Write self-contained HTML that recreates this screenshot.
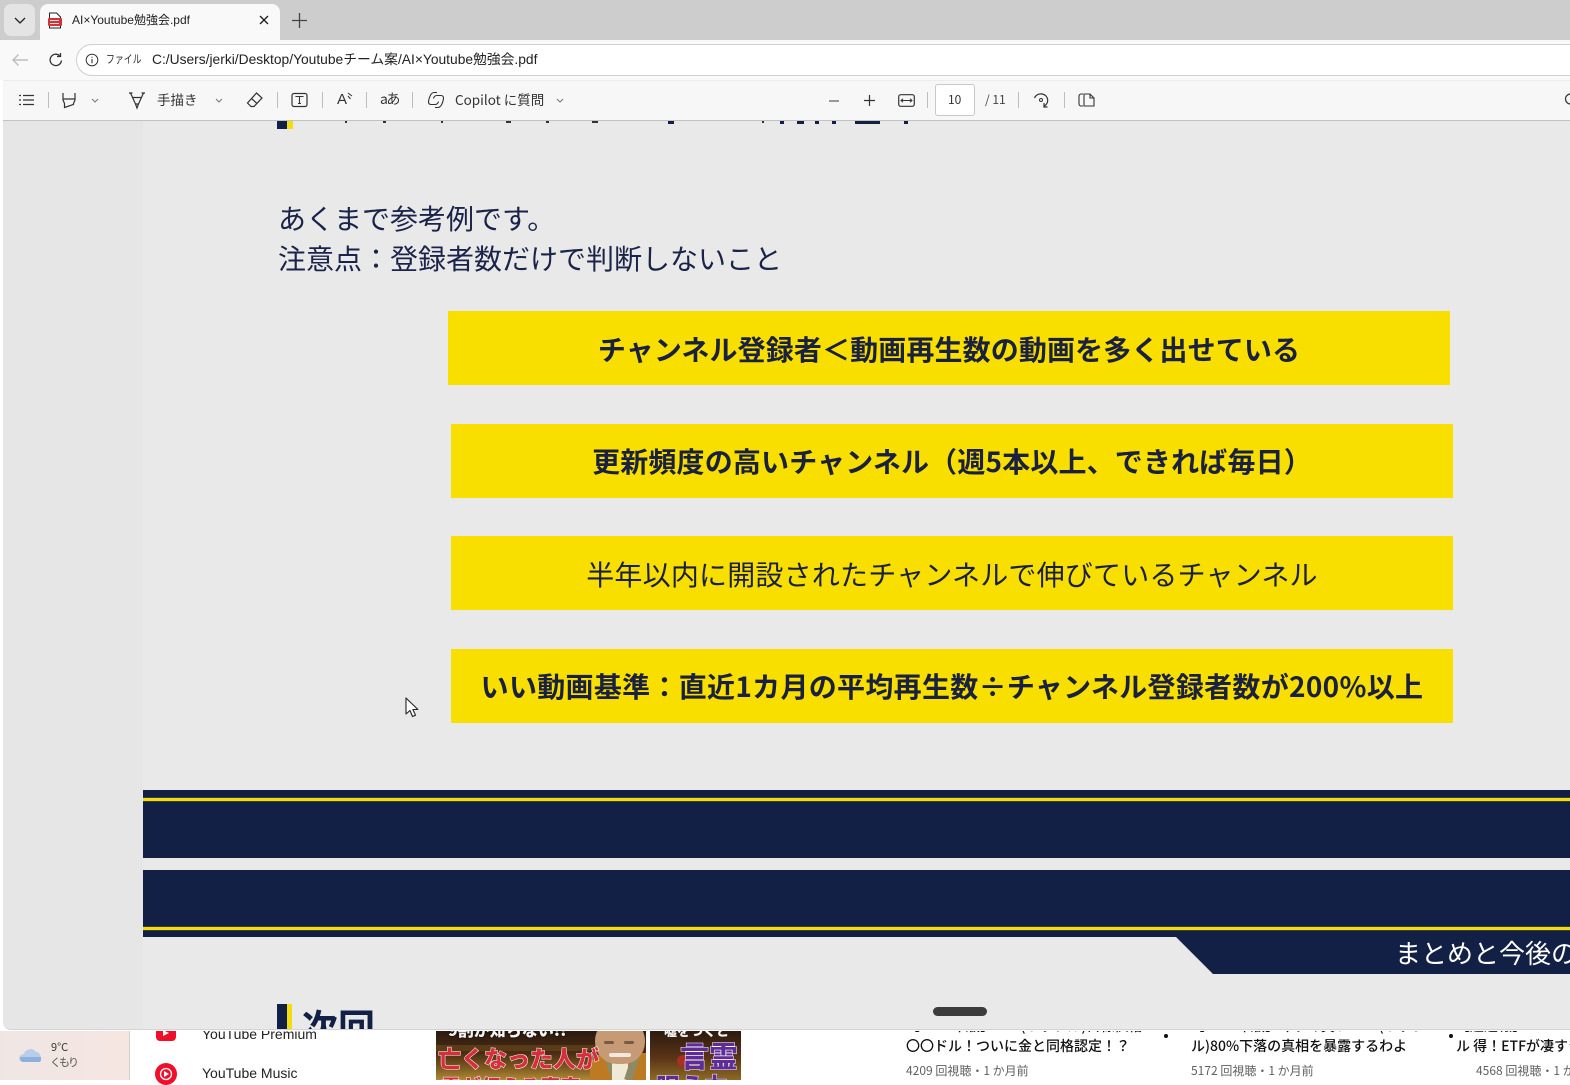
<!DOCTYPE html>
<html lang="ja"><head><meta charset="utf-8"><title>AI×Youtube勉強会.pdf</title>
<style>
*{box-sizing:border-box}
html,body{margin:0;padding:0;width:1570px;height:1080px;overflow:hidden;background:#fff;font-family:"Liberation Sans","Noto Sans CJK JP",sans-serif}
.a{position:absolute}
.t{position:absolute;white-space:nowrap;line-height:1}
.j{font-family:"Noto Sans CJK JP",sans-serif}
.l{font-family:"Liberation Sans","Noto Sans CJK JP",sans-serif}
.y{position:absolute;width:1002px;height:74px;background:#f9df00;color:#1a2140;font:700 28px/76px "Noto Sans CJK JP",sans-serif;text-align:center;white-space:nowrap}
svg{position:absolute;overflow:visible}
.sep{position:absolute;top:92px;width:1px;height:16px;background:#bdbdbd}
</style></head><body>

<!-- underlying page -->
<div class="a" style="left:0;top:1031px;width:130px;height:49px;background:linear-gradient(90deg,#efe6e3,#f6e6e2)"></div>
<div class="a" style="left:129px;top:1031px;width:1px;height:49px;background:#d8d0ce"></div>
<svg style="left:18px;top:1043px" width="26" height="20" viewBox="0 0 26 20"><path d="M2 18c-2-4 1-7 4-7 1-5 9-7 12-2 4 0 6 5 4 9z" fill="#b7cde9"/><path d="M2 14h21v3c0 1-1 2-2 2H5c-2 0-3-2-3-5z" fill="#8db0dd"/></svg>
<div class="t j" style="left:51px;top:1042px;font-size:11px;color:#333">9°C</div>
<div class="t j" style="left:50px;top:1057px;font-size:11px;color:#555;letter-spacing:-2px">くもり</div>

<div class="a" style="left:156px;top:1020px;width:20px;height:21px;background:#f00f2b;border-radius:4px"></div>
<div class="a" style="left:163px;top:1030px;width:0;height:0;border-left:6px solid #fff;border-top:3.500px solid transparent;border-bottom:3.500px solid transparent"></div>
<div class="t" style="left:202px;top:1027px;font-size:14px;color:#222">YouTube Premium</div>
<svg style="left:155px;top:1063px" width="22" height="22" viewBox="0 0 22 22"><circle cx="11" cy="11" r="11" fill="#f00f2b"/><circle cx="11" cy="11" r="5.500" fill="none" stroke="#fff" stroke-width="1.300"/><path d="M9 8l5 3-5 3z" fill="#fff"/></svg>
<div class="t" style="left:202px;top:1066px;font-size:14px;color:#222">YouTube Music</div>

<div class="a" style="left:436px;top:1031px;width:210px;height:49px;background:linear-gradient(180deg,#2c1a10,#4a2c14 45%,#7c5a1f 75%,#b08a35);overflow:hidden">
  <div class="a" style="left:0;top:14px;width:160px;height:6px;background:#6a4a1c;opacity:.6"></div>
  <div class="a" style="left:154px;top:22px;width:56px;height:30px;background:#bd7a20;border-radius:16px 0 0 0"></div>
  <div class="a" style="left:172px;top:24px;width:8px;height:26px;background:#8d8a66;transform:rotate(-18deg)"></div>
  <div class="a" style="left:176px;top:28px;width:16px;height:22px;background:#efe9d6"></div>
  <div class="a" style="left:192px;top:24px;width:8px;height:26px;background:#8d8a66;transform:rotate(18deg)"></div>
  <div class="a" style="left:159px;top:-14px;width:50px;height:47px;background:#c79a76;border-radius:24px 24px 22px 22px"></div>
  <div class="a" style="left:168px;top:10px;width:10px;height:3px;background:#7a5a44;border-radius:2px"></div>
  <div class="a" style="left:188px;top:10px;width:10px;height:3px;background:#7a5a44;border-radius:2px"></div>
  <div class="a" style="left:173px;top:22px;width:22px;height:4px;background:#f3e8de;border-radius:2px"></div>
  <div class="t j" style="left:12px;top:-10px;font-size:16px;font-weight:900;color:#f3f3f3;text-shadow:0 0 2px #000">9割が知らない!!</div>
  <div class="t j" style="left:2px;top:15px;font-size:23px;font-weight:900;color:#d62f3b;-webkit-text-stroke:1px #fff;paint-order:stroke fill">亡くなった人が</div>
  <div class="t j" style="left:5px;top:45px;font-size:20px;font-weight:900;color:#d62f3b;-webkit-text-stroke:1px #fff;paint-order:stroke fill">霊が伝える真実</div>
</div>
<div class="a" style="left:650px;top:1031px;width:91px;height:49px;background:linear-gradient(180deg,#2c1a10,#5a3416 55%,#8d6a25);overflow:hidden">
  <div class="a" style="left:27px;top:24px;width:16px;height:12px;background:#a82f22;border-radius:6px"></div>
  <div class="t j" style="left:14px;top:-7px;font-size:13px;font-weight:900;color:#f3f3f3">嘘をつくと</div>
  <div class="t j" style="left:30px;top:10px;font-size:29px;font-weight:900;color:#5e2c96;-webkit-text-stroke:1px #fff;paint-order:stroke fill">言霊</div>
  <div class="t j" style="left:6px;top:42px;font-size:24px;font-weight:900;color:#5e2c96;-webkit-text-stroke:1px #fff;paint-order:stroke fill">呪う力</div>
</div>

<div class="t j" style="left:906px;top:1019px;font-size:14px;font-weight:500;color:#111">【2024年版】XRP(リップル)目標価格</div>
<div class="t j" style="left:906px;top:1039px;font-size:14px;font-weight:500;color:#111">〇〇ドル！ついに金と同格認定！？</div>
<div class="t j" style="left:906px;top:1065px;font-size:12px;color:#606060">4209 回視聴・1 か月前</div>
<div class="a" style="left:1164px;top:1034px;width:4px;height:4px;background:#111;border-radius:50%"></div>
<div class="t j" style="left:1191px;top:1019px;font-size:14px;font-weight:500;color:#111">【2024年版】今すぐ買い XRP(リップ</div>
<div class="t j" style="left:1191px;top:1039px;font-size:14px;font-weight:500;color:#111">ル)80%下落の真相を暴露するわよ</div>
<div class="t j" style="left:1191px;top:1065px;font-size:12px;color:#606060">5172 回視聴・1 か月前</div>
<div class="a" style="left:1449px;top:1034px;width:4px;height:4px;background:#111;border-radius:50%"></div>
<div class="t j" style="left:1456px;top:1019px;font-size:14px;font-weight:500;color:#111">【超速報】XRP</div>
<div class="t j" style="left:1456px;top:1039px;font-size:14px;font-weight:500;color:#111">ル 得！ETFが凄すぎ</div>
<div class="t j" style="left:1476px;top:1065px;font-size:12px;color:#606060">4568 回視聴・1 か月前</div>

<!-- PDF viewer -->
<div class="a" style="left:0;top:121px;width:1570px;height:910px;background:#fff">
<div class="a" style="left:3px;top:0;width:1567px;height:909px;background:#e6e6e6;overflow:hidden;border-radius:0 0 0 8px;border-bottom:1px solid #d4d4d4">
 <div class="a" style="left:-3px;top:0;width:1570px;height:909px">
  <div class="a" style="left:143px;top:0;width:1427px;height:909px;background:#e9e9e9"></div>
  <div class="a" style="left:277px;top:0;width:10px;height:8px;background:#132046"></div>
  <div class="a" style="left:287px;top:0;width:6px;height:8px;background:#f5dc10"></div>
  <div class="a" style="left:345px;top:0;width:2px;height:2px;background:#333"></div>
  <div class="a" style="left:383px;top:0;width:3px;height:2px;background:#333"></div>
  <div class="a" style="left:441px;top:0;width:2px;height:2px;background:#333"></div>
  <div class="a" style="left:506px;top:0;width:5px;height:2px;background:#333"></div>
  <div class="a" style="left:546px;top:0;width:3px;height:2px;background:#333"></div>
  <div class="a" style="left:592px;top:0;width:6px;height:2px;background:#333"></div>
  <div class="a" style="left:668px;top:0;width:6px;height:3px;background:#132046"></div>
  <div class="a" style="left:762px;top:0;width:2px;height:2px;background:#333"></div>
  <div class="a" style="left:780px;top:0;width:4px;height:3px;background:#132046"></div>
  <div class="a" style="left:797px;top:0;width:7px;height:3px;background:#132046"></div>
  <div class="a" style="left:815px;top:0;width:4px;height:3px;background:#132046"></div>
  <div class="a" style="left:832px;top:0;width:4px;height:3px;background:#132046"></div>
  <div class="a" style="left:855px;top:0;width:25px;height:3px;background:#132046"></div>
  <div class="a" style="left:904px;top:0;width:4px;height:3px;background:#132046"></div>

  <div class="t j" style="left:278px;top:77px;font-size:28px;line-height:40px;color:#1a2348">あくまで参考例です。<br>注意点：登録者数だけで判断しないこと</div>

  <div class="y" style="left:448px;top:190px;letter-spacing:.12px">チャンネル登録者＜動画再生数の動画を多く出せている</div>
  <div class="y" style="left:451px;top:303px;letter-spacing:.16px;line-height:74px">更新頻度の高いチャンネル（週5本以上、できれば毎日）</div>
  <div class="y" style="left:451px;top:415px;font-weight:400;letter-spacing:.2px">半年以内に開設されたチャンネルで伸びているチャンネル</div>
  <div class="y" style="left:451px;top:528px;letter-spacing:.3px;line-height:74px">いい動画基準：直近1カ月の平均再生数÷チャンネル登録者数が200%以上</div>

  <svg style="left:405px;top:576px" width="14" height="22" viewBox="0 0 14 22"><path d="M1 1v16l4-3.500 2.500 6 3-1.300-2.600-5.700h5z" fill="#fff" stroke="#222" stroke-width="1.100" stroke-linejoin="round"/></svg>

  <div class="a" style="left:143px;top:669px;width:1427px;height:68px;background:#132046"></div>
  <div class="a" style="left:143px;top:676px;width:1427px;height:5px;background:#3a3f3a"></div>
  <div class="a" style="left:143px;top:677px;width:1427px;height:3px;background:#f5dc10"></div>
  <div class="a" style="left:143px;top:749px;width:1427px;height:67px;background:#132046"></div>
  <div class="a" style="left:143px;top:805px;width:1427px;height:5px;background:#3a3f3a"></div>
  <div class="a" style="left:143px;top:806px;width:1427px;height:3px;background:#f5dc10"></div>
  <svg style="left:1176px;top:816px" width="394" height="37" viewBox="0 0 394 37"><path d="M0 0H394V37H37z" fill="#132046"/></svg>
  <div class="t j" style="left:1395px;top:817px;font-size:26px;line-height:30px;color:#fff">まとめと今後の</div>

  <div class="a" style="left:277px;top:883px;width:10px;height:26px;background:#132046"></div>
  <div class="a" style="left:287px;top:883px;width:5px;height:26px;background:#f5dc10"></div>
  <div class="t j" style="left:301px;top:882px;font-size:37px;line-height:44px;font-weight:700;color:#132046">次回</div>

  <div class="a" style="left:933px;top:886px;width:54px;height:9px;border-radius:5px;background:#3c3c3c"></div>
 </div>
</div>
</div>

<!-- tab strip -->
<div class="a" style="left:0;top:0;width:1570px;height:40px;background:#cdcdcd"></div>
<div class="a" style="left:4px;top:4px;width:31px;height:32px;border-radius:7px;background:#e4e4e4"></div>
<svg style="left:14px;top:17px" width="12" height="7" viewBox="0 0 12 7"><path d="M1 1l5 5 5-5" fill="none" stroke="#222" stroke-width="1.300"/></svg>
<div class="a" style="left:40px;top:4px;width:240px;height:36px;border-radius:8px 8px 0 0;background:#f9f9f9"></div>
<svg style="left:47px;top:12px" width="16" height="17" viewBox="0 0 16 17"><path d="M2.500 6V1h7l4 4v11h-11v-2" fill="#fff" stroke="#222" stroke-width="1"/><rect x="1" y="6" width="14" height="8" rx="1" fill="#d13438"/><path d="M3 8h9v1H3zM3 11h9v1H3z" fill="#fbdcdc"/></svg>
<div class="t l" style="left:72px;top:14px;font-size:12px;color:#222">AI×Youtube勉強会.pdf</div>
<svg style="left:259px;top:15px" width="10" height="10" viewBox="0 0 10 10"><path d="M1 1l8 8M9 1l-8 8" stroke="#222" stroke-width="1.400"/></svg>
<svg style="left:292px;top:13px" width="15" height="15" viewBox="0 0 15 15"><path d="M7.500 0v15M0 7.500h15" stroke="#444" stroke-width="1.300"/></svg>

<!-- address row -->
<div class="a" style="left:0;top:40px;width:1570px;height:40px;background:#f9f9f9"></div>
<svg style="left:11px;top:53px" width="18" height="14" viewBox="0 0 18 14"><path d="M17 7H2M7.500 1.500L2 7l5.500 5.500" fill="none" stroke="#bdbdbd" stroke-width="1.400"/></svg>
<svg style="left:48px;top:52px" width="16" height="16" viewBox="0 0 16 16"><path d="M13.500 8.500A5.700 5.700 0 1 1 11.600 3.600M12.500 1v3.500H9" fill="none" stroke="#333" stroke-width="1.300"/></svg>
<div class="a" style="left:76px;top:44px;width:1500px;height:32px;border-radius:16px 0 0 16px;background:#fff;border:1px solid #cfcfcf"></div>
<svg style="left:85px;top:53px" width="14" height="14" viewBox="0 0 14 14"><circle cx="7" cy="7" r="5.800" fill="none" stroke="#333" stroke-width="1"/><path d="M7 6v4.200M7 3.700v1.100" stroke="#333" stroke-width="1.100"/></svg>
<div class="t j" style="left:106px;top:54px;font-size:11.500px;color:#333;transform:scaleX(.77);transform-origin:left">ファイル</div>
<div class="t l" style="left:152px;top:53px;font-size:13.800px;color:#222">C:/Users/jerki/Desktop/Youtubeチーム案/AI×Youtube勉強会.pdf</div>

<!-- pdf toolbar -->
<div class="a" style="left:0;top:80px;width:1570px;height:41px;background:#f7f7f7;border-bottom:1px solid #c2c2c2;border-top:1px solid #ececec"></div>
<div class="a" style="left:0;top:80px;width:3px;height:41px;background:#fff"></div>
<svg style="left:18px;top:94px" width="17" height="12" viewBox="0 0 17 12"><path d="M5 1.500h11M5 6h11M5 10.500h11M1 1.500h2M1 6h2M1 10.500h2" stroke="#333" stroke-width="1.200"/></svg>
<div class="sep" style="left:48px"></div>
<svg style="left:61px;top:92px" width="16" height="17" viewBox="0 0 16 17"><path d="M2 1v7l1.500 3.500v4l9-3V11.500L14 8V1M2 7h12" fill="none" stroke="#333" stroke-width="1.200"/></svg>
<svg style="left:91px;top:98px" width="8" height="5" viewBox="0 0 8 5"><path d="M1 1l3 3 3-3" fill="none" stroke="#777" stroke-width="1"/></svg>
<svg style="left:128px;top:91px" width="18" height="18" viewBox="0 0 18 18"><path d="M1 2h3.500M13.500 2H17M2.500 2l5 11h3l5-11M4.500 6.500h9M7.500 13l1.500 4 1.500-4" fill="none" stroke="#333" stroke-width="1.200"/></svg>
<div class="t j" style="left:157px;top:93px;font-size:13.500px;color:#333">手描き</div>
<svg style="left:215px;top:98px" width="8" height="5" viewBox="0 0 8 5"><path d="M1 1l3 3 3-3" fill="none" stroke="#777" stroke-width="1"/></svg>
<svg style="left:246px;top:92px" width="17" height="16" viewBox="0 0 17 16"><path d="M10.500 1L16 6l-8 8.500H5L1.500 11zM5.500 6.500l5.500 5" fill="none" stroke="#333" stroke-width="1.200"/></svg>
<div class="sep" style="left:277px"></div>
<svg style="left:291px;top:92px" width="17" height="16" viewBox="0 0 17 16"><rect x="1" y="1.500" width="15" height="13" rx="2" fill="none" stroke="#333" stroke-width="1.200"/><path d="M5 5V4.500h7V5M8.500 4.500v7M7 11.500h3" fill="none" stroke="#333" stroke-width="1.100"/></svg>
<div class="sep" style="left:322px"></div>
<div class="t" style="left:337px;top:92px;font-size:15px;color:#333">A</div>
<svg style="left:347px;top:92px" width="7" height="8" viewBox="0 0 7 8"><path d="M1 1l4 3M1 4l2.500 3" fill="none" stroke="#333" stroke-width="1"/></svg>
<div class="sep" style="left:366px"></div>
<div class="t j" style="left:380px;top:92px;font-size:14px;color:#333;letter-spacing:-1.500px">aあ</div>
<div class="sep" style="left:412px"></div>
<svg style="left:427px;top:91px" width="18" height="18" viewBox="0 0 18 18"><path d="M7 1.500c-3 0-5 5-5.500 9-.2 2 1 3 2.500 3h4c2 0 3-1 3.500-3M11 16.500c3 0 5-5 5.500-9 .2-2-1-3-2.500-3h-4C8 4.500 7 5.500 6.500 7.500M7 1.500h3M8 16.500h3" fill="none" stroke="#333" stroke-width="1.100"/></svg>
<div class="t j" style="left:455px;top:93px;font-size:13.500px;color:#333">Copilot に質問</div>
<svg style="left:556px;top:98px" width="8" height="5" viewBox="0 0 8 5"><path d="M1 1l3 3 3-3" fill="none" stroke="#777" stroke-width="1"/></svg>

<div class="a" style="left:829px;top:100px;width:10px;height:2px;background:#999"></div>
<svg style="left:864px;top:95px" width="11" height="11" viewBox="0 0 11 11"><path d="M5.500 0v11M0 5.500h11" stroke="#333" stroke-width="1.200"/></svg>
<svg style="left:898px;top:94px" width="17" height="13" viewBox="0 0 17 13"><rect x=".7" y=".7" width="15.600" height="11.600" rx="2" fill="none" stroke="#333" stroke-width="1.200"/><path d="M3 6.500h11M5 4.800L3 6.500l2 1.700M12 4.800l2 1.700-2 1.700" fill="none" stroke="#333" stroke-width="1"/></svg>
<div class="sep" style="left:927px"></div>
<div class="a" style="left:935px;top:84px;width:40px;height:32px;background:#fff;border:1px solid #c8c8c8;border-radius:3px"></div>
<div class="t j" style="left:948px;top:94px;font-size:12px;color:#333">10</div>
<div class="t j" style="left:985px;top:94px;font-size:12px;color:#444">/ 11</div>
<div class="sep" style="left:1018px"></div>
<svg style="left:1033px;top:92px" width="16" height="18" viewBox="0 0 16 18"><path d="M1.500 6A7 7 0 0 1 14 5.500c1.500 3 .5 6.500-2.500 8.500M11 11v4h3.500" fill="none" stroke="#333" stroke-width="1.200"/><circle cx="8" cy="8" r="1.500" fill="none" stroke="#333"/></svg>
<div class="sep" style="left:1064px"></div>
<svg style="left:1078px;top:93px" width="17" height="14" viewBox="0 0 17 14"><path d="M5 1H3C2 1 1 2 1 3v8c0 1 1 2 2 2h2M6 1h6l4 4v8H6zM12 1v4h4" fill="none" stroke="#333" stroke-width="1.100"/></svg>
<svg style="left:1564px;top:93px" width="12" height="14" viewBox="0 0 12 14"><circle cx="6.500" cy="6" r="5" fill="none" stroke="#333" stroke-width="1.200"/></svg>

</body></html>
